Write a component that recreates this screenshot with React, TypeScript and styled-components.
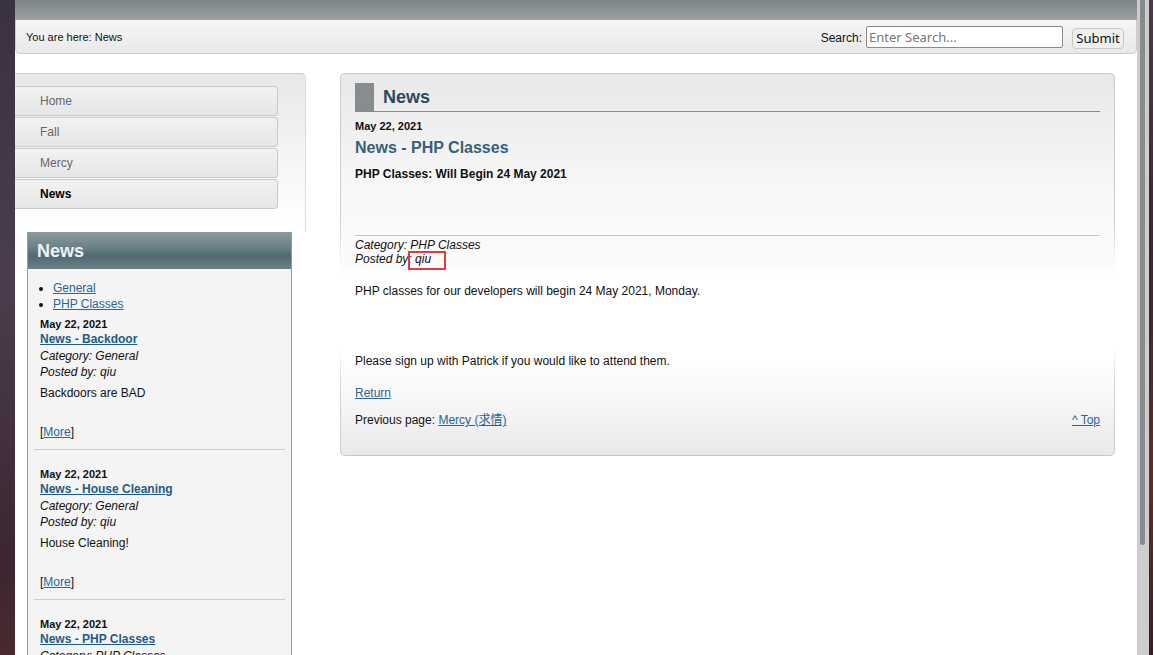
import styled, { createGlobalStyle } from 'styled-components';

const GlobalStyle = createGlobalStyle`
	html, body {
		margin: 0;
		height: 100%;
		overflow: hidden;
	}
	body {
		background: linear-gradient(165deg, #3a3142 0%, #4b3d4d 30%, #3b2632 58%, #5b2f29 82%, #3a1e1f 100%);
		font-family: "Liberation Sans", Arial, "Noto Sans CJK SC", sans-serif;
		color: #111;
	}
`;

const Frame = styled.div`
	display: flex;
	margin-left: 15px;
	width: 1134px;
	height: 655px;
	background: #fff;
`;

const Page = styled.div`
	width: 1122px;
	height: 655px;
	overflow: hidden;
`;

// the window's scrollbar, drawn since the shot hides real ones
const ScrollTrack = styled.div`
	width: 12px;
	flex: none;
	background: #cdcdcd;
`;

const ScrollThumb = styled.div`
	margin: 0 4px 0 3px;
	height: 545px;
	border-radius: 0 0 3px 3px;
	background: #868b8b;
`;

const TopBar = styled.div`
	height: 20px;
	background: linear-gradient(#7b8485, #9da2a2);
`;

const Crumbs = styled.div`
	box-sizing: border-box;
	height: 34px;
	display: flex;
	align-items: center;
	justify-content: space-between;
	padding: 0 12px 0 10px;
	border: 1px solid #ccc;
	border-top: none;
	border-radius: 0 0 5px 5px;
	background: linear-gradient(#f6f6f6, #e9e9e9);
	font-size: 11px;
	color: #111;
`;

const Search = styled.form`
	display: flex;
	align-items: center;
	margin: 3px 0 0;
	font-size: 12px;
`;

const SearchInput = styled.input`
	box-sizing: border-box;
	width: 197px;
	height: 22px;
	margin: -2px 9px 0 4px;
	padding: 0 2px;
	border: 1px solid #8a8a8a;
	border-radius: 2px;
	font: 13px "Noto Sans", "DejaVu Sans", sans-serif;
	color: #333;

	&::placeholder {
		color: #777;
	}
`;

const SubmitButton = styled.button`
	box-sizing: border-box;
	width: 52px;
	height: 21px;
	padding: 0;
	border: 1px solid #c8c8c8;
	border-radius: 4px;
	background: #efefef;
	font: 13px "Noto Sans", "DejaVu Sans", sans-serif;
	color: #111;
`;

const Columns = styled.div`
	display: flex;
	align-items: flex-start;
	gap: 34px;
	margin-top: 19px;
`;

const LeftCol = styled.div`
	width: 291px;
	flex: none;
`;

const NavPanel = styled.nav`
	border-top: 1px solid #ccc;
	border-right: 1px solid #dcdcdc;
	border-top-right-radius: 5px;
	background: linear-gradient(#e8e8e8, #fff 150px);
	padding: 12px 0 22px;
`;

const NavItem = styled.a<{ $active?: boolean }>`
	box-sizing: border-box;
	display: flex;
	align-items: center;
	width: 263px;
	height: 30px;
	margin-bottom: 1px;
	padding: 0 0 1px 25px;
	border: 1px solid #cacaca;
	border-left: none;
	border-radius: 0 4px 4px 0;
	background: linear-gradient(#f2f2f2, #e6e6e6);
	font-size: 12px;
	font-weight: ${p => (p.$active ? 'bold' : 'normal')};
	color: ${p => (p.$active ? '#000' : '#666')};
	text-decoration: none;
`;

const SideBox = styled.div`
	margin-left: 12px;
	width: 265px;
	box-sizing: border-box;
	border: 1px solid #999;
	border-top: none;
	background: #f4f4f4;
`;

const SideHeader = styled.h2`
	margin: 0;
	height: 37px;
	line-height: 38px;
	padding-left: 9px;
	background: linear-gradient(#8a9b9f 0%, #6c8288 40%, #506a72 65%, #6a8187 100%);
	color: #eef2f2;
	font-size: 18px;
	font-weight: bold;
`;

const CatList = styled.ul`
	margin: 11px 0 5px;
	padding-left: 25px;
	font-size: 12px;
	line-height: 16px;
`;

const Link = styled.a`
	color: #2a6593;
	text-decoration: underline;
`;

const Entry = styled.div`
	margin: 0 6px 17px;
	padding: 0 0 10px 6px;
	border-bottom: 1px solid #cdcdcd;
	font-size: 12px;
`;

const EntryDate = styled.div`
	font-size: 11px;
	font-weight: bold;
	line-height: 14px;
`;

const EntryTitle = styled(Link)`
	display: inline-block;
	margin-top: 1px;
	font-weight: bold;
	line-height: 14px;
	color: #1f5b8a;
`;

const EntryMeta = styled.div<{ $first?: boolean }>`
	margin-top: ${p => (p.$first ? 2 : 0)}px;
	font-style: italic;
	line-height: 16px;
`;

const EntryText = styled.div`
	margin-top: 6px;
	line-height: 14px;
`;

const More = styled.div`
	margin-top: 25px;
	line-height: 14px;
`;

const MainFrame = styled.div`
	width: 775px;
	flex: none;
	box-sizing: border-box;
	padding: 1px;
	border-radius: 5px;
	background: linear-gradient(#c9c9c9 0, #d0d0d0 150px, #fff 195px, #fff 275px, #d6d6d6 310px, #c9c9c9 100%);
`;

const Main = styled.main`
	border-radius: 4px;
	padding: 9px 14px 28px;
	background: linear-gradient(#e8e8e8 0, #f8f8f8 120px, #fbfbfb 190px, #fff 200px, #fff 285px, #f6f6f6 330px, #e8e8e8 100%);
	font-size: 12px;
	color: #111;
`;

const MainHeader = styled.div`
	display: flex;
	height: 28px;
	border-bottom: 1px solid #888;
`;

const HeaderMark = styled.span`
	width: 19px;
	background: #878d8e;
`;

const HeaderTitle = styled.h1`
	margin: 0 0 0 9px;
	font-size: 18px;
	line-height: 28px;
	color: #2a4a5f;
`;

const PostDate = styled.div`
	margin-top: 7px;
	font-size: 11px;
	font-weight: bold;
	line-height: 14px;
`;

const PostTitle = styled.h2`
	margin: 5px 0 0;
	font-size: 16px;
	line-height: 20px;
	color: #3a5f78;
`;

const PostLead = styled.div`
	margin-top: 8px;
	font-weight: bold;
	line-height: 16px;
`;

const Rule = styled.hr`
	margin: 53px 0 0;
	border: none;
	border-top: 1px solid #c6c6c6;
`;

const PostMeta = styled.div<{ $first?: boolean }>`
	margin-top: ${p => (p.$first ? 2 : 0)}px;
	font-style: italic;
	line-height: 14px;
`;

const Highlight = styled.span`
	position: relative;

	&::after {
		content: '';
		position: absolute;
		left: 0;
		top: -1px;
		width: 38px;
		height: 19px;
		box-sizing: border-box;
		border: 2px solid #e53a3d;
	}
`;

const Para = styled.p<{ $gap: number }>`
	margin: ${p => p.$gap}px 0 0;
	line-height: 14px;
`;

const Footer = styled.div`
	display: flex;
	justify-content: space-between;
	margin-top: 13px;
	line-height: 14px;
`;

const sideEntries = [{
	title: 'News - Backdoor',
	category: 'General',
	text: 'Backdoors are BAD'
}, {
	title: 'News - House Cleaning',
	category: 'General',
	text: 'House Cleaning!'
}, {
	title: 'News - PHP Classes',
	category: 'PHP Classes',
	text: 'PHP Classes: Will Begin 24 May 2021'
}];

const App = () => {
	const entries = sideEntries.map(e => (
		<Entry key={e.title}>
			<EntryDate>May 22, 2021</EntryDate>
			<EntryTitle href="#">{e.title}</EntryTitle>
			<EntryMeta $first>Category: {e.category}</EntryMeta>
			<EntryMeta>Posted by: qiu</EntryMeta>
			<EntryText>{e.text}</EntryText>
			<More>[<Link href="#">More</Link>]</More>
		</Entry>
	));

	return (
		<>
			<GlobalStyle />
			<Frame>
				<Page>
					<TopBar />
					<Crumbs>
						<span>You are here: News</span>
						<Search onSubmit={ev => ev.preventDefault()}>
							Search:
							<SearchInput placeholder="Enter Search..." />
							<SubmitButton type="submit">Submit</SubmitButton>
						</Search>
					</Crumbs>

					<Columns>
						<LeftCol>
							<NavPanel>
								<NavItem href="#">Home</NavItem>
								<NavItem href="#">Fall</NavItem>
								<NavItem href="#">Mercy</NavItem>
								<NavItem href="#" $active>News</NavItem>
							</NavPanel>

							<SideBox>
								<SideHeader>News</SideHeader>
								<CatList>
									<li><Link href="#">General</Link></li>
									<li><Link href="#">PHP Classes</Link></li>
								</CatList>
								{entries}
							</SideBox>
						</LeftCol>

						<MainFrame>
							<Main>
								<MainHeader>
									<HeaderMark />
									<HeaderTitle>News</HeaderTitle>
								</MainHeader>
								<PostDate>May 22, 2021</PostDate>
								<PostTitle>News - PHP Classes</PostTitle>
								<PostLead>PHP Classes: Will Begin 24 May 2021</PostLead>
								<Rule />
								<PostMeta $first>Category: PHP Classes</PostMeta>
								<PostMeta>
									Posted by<Highlight>: qiu</Highlight>
								</PostMeta>
								<Para $gap={18}>PHP classes for our developers will begin 24 May 2021, Monday.</Para>
								<Para $gap={56}>Please sign up with Patrick if you would like to attend them.</Para>
								<Para $gap={18}><Link href="#">Return</Link></Para>
								<Footer>
									<span>Previous page: <Link href="#">Mercy (求情)</Link></span>
									<Link href="#">^ Top</Link>
								</Footer>
							</Main>
						</MainFrame>
					</Columns>
				</Page>
				<ScrollTrack>
					<ScrollThumb />
				</ScrollTrack>
			</Frame>
		</>
	);
};

export default App;
